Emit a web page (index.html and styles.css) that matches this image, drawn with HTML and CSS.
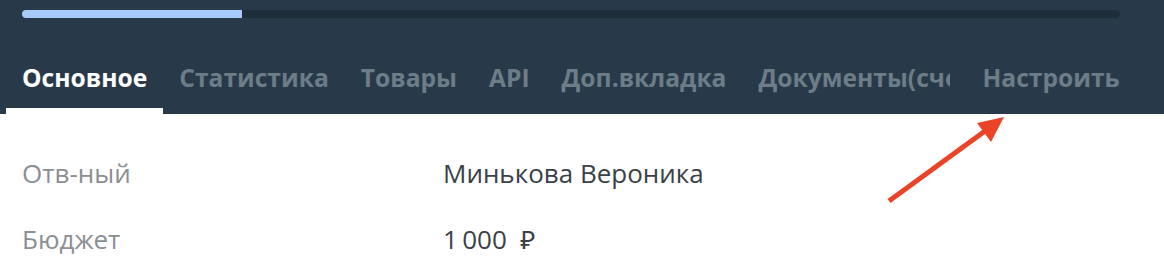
FILE: index.html
```html
<!DOCTYPE html>
<html lang="ru">
<head>
<meta charset="utf-8">
<link rel="stylesheet" href="styles.css">
</head>
<body>
<div class="header">
  <div class="progress"><div class="progress-fill" style="width:20%"></div></div>
  <nav class="tabs">
    <a class="tab active">Основное</a>
    <a class="tab">Статистика</a>
    <a class="tab">Товары</a>
    <a class="tab">API</a>
    <a class="tab">Доп.вкладка</a>
    <a class="tab clipped"><span class="clip">Документы(счета)</span></a>
    <a class="tab">Настроить</a>
  </nav>
</div>
<div class="content">
  <div class="row"><span class="label">Отв-ный</span><span class="value">Минькова Вероника</span></div>
  <div class="row"><span class="label">Бюджет</span><span class="value">1&thinsp;000 &nbsp;₽</span></div>
  <svg class="arrow" width="140" height="100" viewBox="880 110 140 100">
    <line x1="889" y1="201" x2="985" y2="131" stroke="#ea4328" stroke-width="5"/>
    <polygon points="1004,117 977,123 991,142" fill="#ea4328"/>
  </svg>
</div>
</body>
</html>
```
FILE: styles.css
```css
html, body { margin: 0; padding: 0; background: #fff; }
body { font-family: "Open Sans", "Noto Sans", sans-serif; width: 1164px; height: 268px; overflow: hidden; position: relative; }
.header { background: #283a4a; height: 114px; padding: 10px 0 0 6px; box-sizing: border-box; display: flex; flex-direction: column; }
.progress { margin-left: 16px; width: 1098px; height: 8px; border-radius: 4px; background: #1e2d3a; overflow: hidden; flex: none; }
.progress-fill { height: 100%; background: #a6cbf8; }
.tabs { display: flex; height: 96px; }
.tab { display: block; height: 96px; box-sizing: border-box; padding: 43px 16px 0; line-height: 34px; font-weight: 700; font-size: 24.6px; color: #6d7d88; white-space: nowrap; }
.tab.active { color: #fff; border-bottom: 6px solid #fff; }
.clip { display: block; max-width: 192px; overflow: hidden; }
.content { padding: 41px 22px 0; display: flex; flex-direction: column; gap: 30px; }
.row { display: flex; height: 36px; line-height: 36px; font-size: 26px; }
.label { width: 421px; color: #8a8f94; }
.value { color: #3a4148; }
.arrow { position: absolute; left: 880px; top: 110px; }
```
